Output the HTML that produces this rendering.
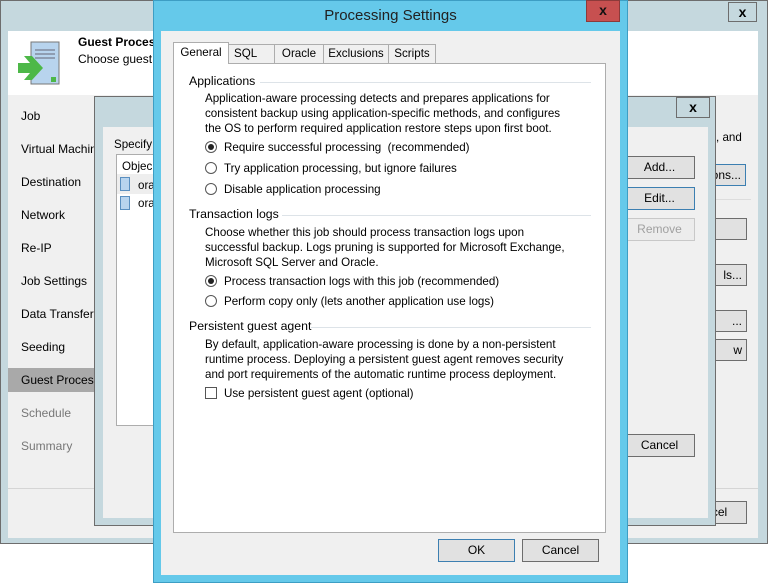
<!DOCTYPE html>
<html><head><style>
*{margin:0;padding:0;box-sizing:border-box}
body{width:768px;height:583px;position:relative;overflow:hidden;background:#fff;font-family:"Liberation Sans",sans-serif;font-size:11.6px;color:#000}
.a{position:absolute}
.t{position:absolute;white-space:nowrap;line-height:15px}
.btn{position:absolute;background:#e1e1e1;border:1px solid #adadad;text-align:center;line-height:20px;font-size:12px}
.blue{border-color:#3c7fb1}
.dis{color:#a0a0a0;border-color:#c8c8c8;background:#ececec}
.x{position:absolute;font-weight:bold;font-size:14px;text-align:center;line-height:18px}
.rad{position:absolute;width:12px;height:12px;border:1px solid #555;border-radius:50%;background:#fff}
.rad.on::after{content:"";position:absolute;left:2px;top:2px;width:6px;height:6px;border-radius:50%;background:#222}
.tab{position:absolute;top:44px;height:20px;border:1px solid #adadad;background:#f0f0f0;text-align:center;line-height:18px}
.nav{position:absolute;left:21px;white-space:nowrap;font-size:12px}
</style></head><body>
<div class="a" style="left:0;top:0;width:768px;height:544px;background:#c5d8de;border:1px solid #6d6d6d"></div>
<div class="x" style="left:728px;top:2px;width:29px;height:20px;border:1px solid #6d6d6d;background:#c5d8de">x</div>
<div class="a" style="left:8px;top:31px;width:750px;height:64px;background:#fff"></div>
<div class="a" style="left:8px;top:95px;width:750px;height:443px;background:#f0f0f0"></div>
<svg class="a" style="left:16px;top:40px" width="46" height="48">
<rect x="15" y="2" width="28" height="42" fill="#b8d4ee" stroke="#777"/>
<line x1="19" y1="10" x2="39" y2="10" stroke="#667"/><line x1="19" y1="14" x2="39" y2="14" stroke="#667"/><line x1="19" y1="18" x2="39" y2="18" stroke="#667"/>
<rect x="35" y="37" width="5" height="5" fill="#4db848"/>
<polygon points="2,23 14,23 8,16 16,16 27,28 16,40 8,40 14,33 2,33" fill="#4db848"/>
</svg>
<div class="t" style="left:78px;top:35px;font-weight:bold;font-size:12px">Guest Process</div>
<div class="t" style="left:78px;top:52px;font-size:12px">Choose guest</div>
<div class="nav" style="top:109px">Job</div>
<div class="nav" style="top:142px">Virtual Machin</div>
<div class="nav" style="top:175px">Destination</div>
<div class="nav" style="top:208px">Network</div>
<div class="nav" style="top:241px">Re-IP</div>
<div class="nav" style="top:274px">Job Settings</div>
<div class="nav" style="top:307px">Data Transfer</div>
<div class="nav" style="top:340px">Seeding</div>
<div class="a" style="left:8px;top:368px;width:86px;height:24px;background:#a9a9a9"></div>
<div class="nav" style="top:373px">Guest Process</div>
<div class="nav" style="top:406px;color:#777">Schedule</div>
<div class="nav" style="top:439px;color:#777">Summary</div>
<div class="a" style="left:8px;top:488px;width:750px;height:1px;background:#fff;border-top:1px solid #d5d5d5"></div>
<div class="btn dis" style="left:582px;top:501px;width:80px;height:23px">Finish</div>
<div class="btn" style="left:670px;top:501px;width:77px;height:23px;border-color:#6d6d6d">Cancel</div>
<div class="t" style="left:716px;top:130px">, and</div>
<div class="btn blue" style="left:700px;top:164px;width:46px;height:22px;text-align:right;padding-right:4px">ons...</div>
<div class="a" style="left:715px;top:199px;width:36px;height:1px;background:#ddd"></div>
<div class="btn" style="left:700px;top:218px;width:47px;height:22px;border-color:#6d6d6d"></div>
<div class="btn" style="left:700px;top:264px;width:47px;height:22px;border-color:#6d6d6d;text-align:right;padding-right:4px">ls...</div>
<div class="btn" style="left:700px;top:310px;width:47px;height:22px;border-color:#6d6d6d;text-align:right;padding-right:4px">...</div>
<div class="btn" style="left:700px;top:339px;width:47px;height:22px;border-color:#6d6d6d;text-align:right;padding-right:4px">w</div>
<div class="a" style="left:94px;top:96px;width:622px;height:430px;background:#c5d8de;border:1px solid #6d6d6d"></div>
<div class="x" style="left:676px;top:97px;width:34px;height:21px;border:1px solid #6d6d6d">x</div>
<div class="a" style="left:103px;top:127px;width:605px;height:391px;background:#f0f0f0"></div>
<div class="t" style="left:114px;top:137px">Specify</div>
<div class="a" style="left:116px;top:154px;width:50px;height:272px;background:#fff;border:1px solid #adadad"></div>
<div class="t" style="left:122px;top:159px">Objec</div>
<div class="a" style="left:117px;top:174px;width:48px;height:20px;background:#eee"></div>
<div class="a" style="left:120px;top:177px;width:10px;height:14px;background:#b8d4ee;border:1px solid #5a8fc0"></div>
<div class="t" style="left:138px;top:178px">ora</div>
<div class="a" style="left:120px;top:196px;width:10px;height:14px;background:#b8d4ee;border:1px solid #5a8fc0"></div>
<div class="t" style="left:138px;top:196px">ora</div>
<div class="btn" style="left:624px;top:156px;width:71px;height:23px;border-color:#6d6d6d">Add...</div>
<div class="btn blue" style="left:624px;top:187px;width:71px;height:23px">Edit...</div>
<div class="btn dis" style="left:624px;top:218px;width:71px;height:23px">Remove</div>
<div class="btn" style="left:624px;top:434px;width:71px;height:23px;border-color:#6d6d6d">Cancel</div>
<div class="a" style="left:153px;top:0;width:475px;height:583px;background:#65c9ea;border:1px solid #3d9ec4"></div>
<div class="t" style="left:153px;top:7px;width:475px;text-align:center;font-size:15px;line-height:18px;color:#222">Processing Settings</div>
<div class="x" style="left:586px;top:0;width:34px;height:22px;background:#c75050;border:1px solid #8c3a3a;color:#111">x</div>
<div class="a" style="left:161px;top:31px;width:459px;height:544px;background:#f0f0f0"></div>
<div class="tab" style="left:228px;width:47px;text-align:left;padding-left:5px">SQL</div>
<div class="tab" style="left:274px;width:50px">Oracle</div>
<div class="tab" style="left:323px;width:66px">Exclusions</div>
<div class="tab" style="left:388px;width:48px">Scripts</div>
<div class="a" style="left:173px;top:63px;width:433px;height:470px;background:#fff;border:1px solid #adadad"></div>
<div class="tab" style="left:173px;top:42px;width:56px;height:22px;background:#fff;border-bottom:none;line-height:20px">General</div>
<div class="t" style="left:189px;top:74px;font-size:12.3px">Applications</div>
<div class="a" style="left:260px;top:82px;width:331px;height:1px;background:#dde3e8"></div>
<div class="t" style="left:205px;top:91px">Application-aware processing detects and prepares applications for<br>consistent backup using application-specific methods, and configures<br>the OS to perform required application restore steps upon first boot.</div>
<div class="rad on" style="left:205px;top:141px"></div><div class="t" style="left:224px;top:140px">Require successful processing &nbsp;(recommended)</div>
<div class="rad" style="left:205px;top:162px"></div><div class="t" style="left:224px;top:161px">Try application processing, but ignore failures</div>
<div class="rad" style="left:205px;top:183px"></div><div class="t" style="left:224px;top:182px">Disable application processing</div>
<div class="t" style="left:189px;top:207px;font-size:12.3px">Transaction logs</div>
<div class="a" style="left:282px;top:215px;width:309px;height:1px;background:#dde3e8"></div>
<div class="t" style="left:205px;top:225px">Choose whether this job should process transaction logs upon<br>successful backup. Logs pruning is supported for Microsoft Exchange,<br>Microsoft SQL Server and Oracle.</div>
<div class="rad on" style="left:205px;top:275px"></div><div class="t" style="left:224px;top:274px">Process transaction logs with this job (recommended)</div>
<div class="rad" style="left:205px;top:295px"></div><div class="t" style="left:224px;top:294px">Perform copy only (lets another application use logs)</div>
<div class="t" style="left:189px;top:319px;font-size:12.3px">Persistent guest agent</div>
<div class="a" style="left:311px;top:327px;width:280px;height:1px;background:#dde3e8"></div>
<div class="t" style="left:205px;top:337px">By default, application-aware processing is done by a non-persistent<br>runtime process. Deploying a persistent guest agent removes security<br>and port requirements of the automatic runtime process deployment.</div>
<div class="a" style="left:205px;top:387px;width:12px;height:12px;border:1px solid #555;background:#fff"></div>
<div class="t" style="left:224px;top:386px">Use persistent guest agent (optional)</div>
<div class="btn blue" style="left:438px;top:539px;width:77px;height:23px">OK</div>
<div class="btn" style="left:522px;top:539px;width:77px;height:23px;border-color:#6d6d6d">Cancel</div>
</body></html>
